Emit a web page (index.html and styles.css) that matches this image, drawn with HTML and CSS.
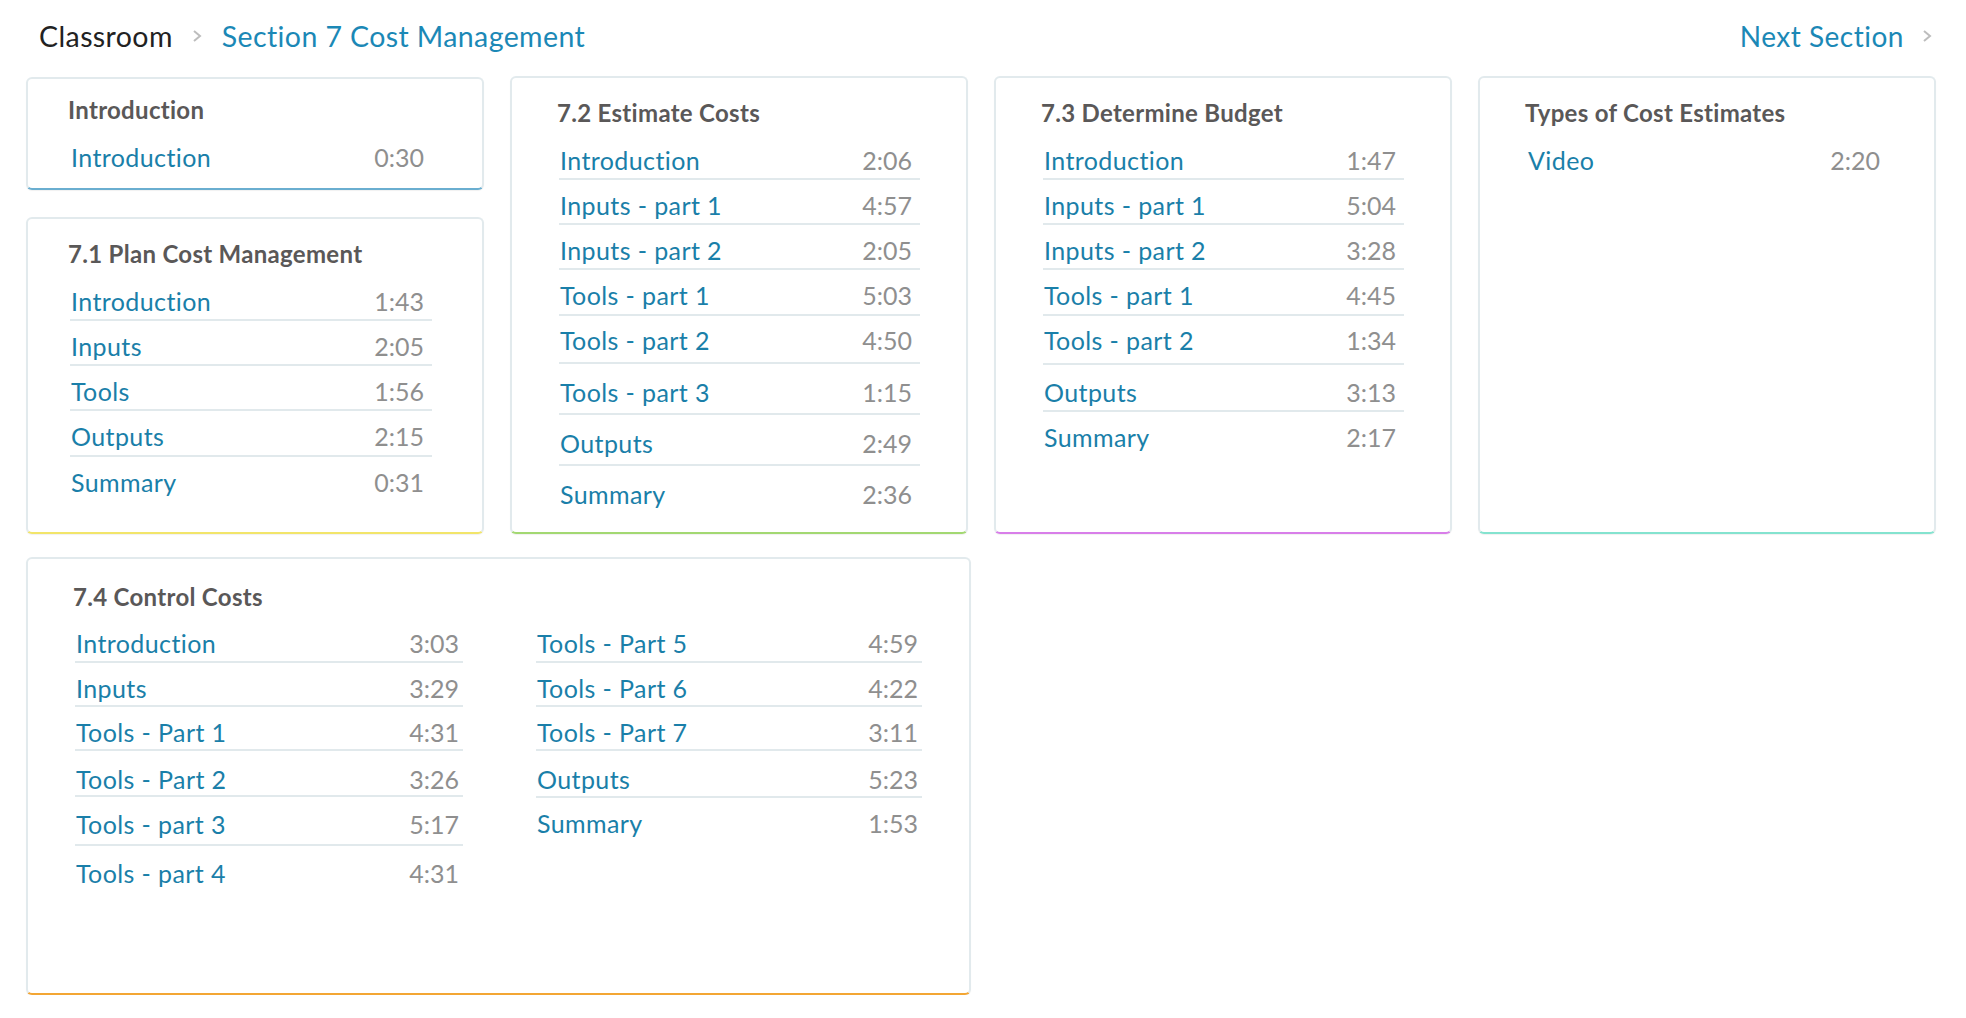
FILE: index.html
```html
<!DOCTYPE html>
<html lang="en">
<head>
<meta charset="utf-8">
<title>Section 7 Cost Management</title>
<link rel="stylesheet" href="styles.css">
</head>
<body>
<div class="page">
  <header class="topbar">
    <nav class="crumbs">
      <span class="crumb-root">Classroom</span>
      <svg class="chev" width="10" height="14" viewBox="0 0 10 14"><polyline points="2,2 8,7 2,12" fill="none" stroke="#bdbdbd" stroke-width="2"/></svg>
      <span class="crumb-current">Section 7 Cost Management</span>
    </nav>
    <a class="next">Next Section
      <svg class="chev" width="10" height="14" viewBox="0 0 10 14"><polyline points="2,2 8,7 2,12" fill="none" stroke="#bdbdbd" stroke-width="2"/></svg>
    </a>
  </header>

  <main class="grid">
    <div class="col1">
      <section class="card card-intro c-blue">
        <h2 class="card-title">Introduction</h2>
        <ul class="list">
          <li class="row"><span class="name">Introduction</span><span class="time">0:30</span></li>
        </ul>
      </section>
      <section class="card card-fill c-yellow">
        <h2 class="card-title">7.1 Plan Cost Management</h2>
        <ul class="list">
          <li class="row"><span class="name">Introduction</span><span class="time">1:43</span></li>
          <li class="row"><span class="name">Inputs</span><span class="time">2:05</span></li>
          <li class="row"><span class="name">Tools</span><span class="time">1:56</span></li>
          <li class="row h46"><span class="name">Outputs</span><span class="time">2:15</span></li>
          <li class="row"><span class="name">Summary</span><span class="time">0:31</span></li>
        </ul>
      </section>
    </div>

    <section class="card c-green">
      <h2 class="card-title">7.2 Estimate Costs</h2>
      <ul class="list">
        <li class="row"><span class="name">Introduction</span><span class="time">2:06</span></li>
        <li class="row"><span class="name">Inputs - part 1</span><span class="time">4:57</span></li>
        <li class="row"><span class="name">Inputs - part 2</span><span class="time">2:05</span></li>
        <li class="row h46"><span class="name">Tools - part 1</span><span class="time">5:03</span></li>
        <li class="row h48"><span class="name">Tools - part 2</span><span class="time">4:50</span></li>
        <li class="row h51"><span class="name">Tools - part 3</span><span class="time">1:15</span></li>
        <li class="row h51"><span class="name">Outputs</span><span class="time">2:49</span></li>
        <li class="row h51"><span class="name">Summary</span><span class="time">2:36</span></li>
      </ul>
    </section>

    <section class="card c-purple">
      <h2 class="card-title">7.3 Determine Budget</h2>
      <ul class="list">
        <li class="row"><span class="name">Introduction</span><span class="time">1:47</span></li>
        <li class="row"><span class="name">Inputs - part 1</span><span class="time">5:04</span></li>
        <li class="row"><span class="name">Inputs - part 2</span><span class="time">3:28</span></li>
        <li class="row h46"><span class="name">Tools - part 1</span><span class="time">4:45</span></li>
        <li class="row h49"><span class="name">Tools - part 2</span><span class="time">1:34</span></li>
        <li class="row h47"><span class="name">Outputs</span><span class="time">3:13</span></li>
        <li class="row"><span class="name">Summary</span><span class="time">2:17</span></li>
      </ul>
    </section>

    <section class="card c-teal">
      <h2 class="card-title">Types of Cost Estimates</h2>
      <ul class="list">
        <li class="row"><span class="name">Video</span><span class="time">2:20</span></li>
      </ul>
    </section>

    <section class="card card-wide c-orange">
      <h2 class="card-title">7.4 Control Costs</h2>
      <div class="two-col">
        <ul class="list">
          <li class="row"><span class="name">Introduction</span><span class="time">3:03</span></li>
          <li class="row h44"><span class="name">Inputs</span><span class="time">3:29</span></li>
          <li class="row h44"><span class="name">Tools - Part 1</span><span class="time">4:31</span></li>
          <li class="row h46b"><span class="name">Tools - Part 2</span><span class="time">3:26</span></li>
          <li class="row h49b"><span class="name">Tools - part 3</span><span class="time">5:17</span></li>
          <li class="row h49b"><span class="name">Tools - part 4</span><span class="time">4:31</span></li>
        </ul>
        <ul class="list">
          <li class="row"><span class="name">Tools - Part 5</span><span class="time">4:59</span></li>
          <li class="row h44"><span class="name">Tools - Part 6</span><span class="time">4:22</span></li>
          <li class="row h44"><span class="name">Tools - Part 7</span><span class="time">3:11</span></li>
          <li class="row h47b"><span class="name">Outputs</span><span class="time">5:23</span></li>
          <li class="row"><span class="name">Summary</span><span class="time">1:53</span></li>
        </ul>
      </div>
    </section>
  </main>
</div>
</body>
</html>
```

FILE: styles.css
```css
* { box-sizing: border-box; }

html, body {
  margin: 0;
  padding: 0;
  background: #ffffff;
}

body {
  font-family: Lato, "Noto Sans", "Liberation Sans", sans-serif;
  color: #333;
}

.page {
  padding: 0 30px 0 26px;
}

/* ---------- top bar ---------- */
.topbar {
  display: flex;
  justify-content: space-between;
  align-items: center;
  height: 76px;
  padding: 0 4px 4px 13px;
}

.crumbs {
  display: flex;
  align-items: center;
  font-size: 28.5px;
  letter-spacing: 0.4px;
  line-height: 36px;
}

.crumb-root {
  color: #222222;
}

.crumbs .chev {
  margin: 0 20px 0 19px;
}

.crumb-current {
  color: #1b88b6;
}

.next {
  display: flex;
  align-items: center;
  font-size: 28px;
  letter-spacing: 0.5px;
  line-height: 36px;
  color: #1b88b6;
}

.next .chev {
  margin-left: 18px;
}

/* ---------- grid ---------- */
.grid {
  display: grid;
  grid-template-columns: repeat(4, 458px);
  grid-template-rows: 458px auto;
  column-gap: 26px;
  row-gap: 23px;
}

.col1 {
  display: flex;
  flex-direction: column;
  gap: 27px;
  padding-top: 1px;
}

.card {
  background: #fff;
  border: 2px solid #e2eaed;
  border-radius: 6px;
  box-shadow: 0 1px 1px rgba(0, 0, 0, 0.06);
  padding: 20px 46px 0 47px;
}

.col1 .card {
  padding-left: 42px;
  padding-right: 50px;
}

.col1 .card-intro {
  padding-top: 16px;
  padding-bottom: 11px;
}

.card-fill {
  flex: 1;
}

.c-blue   { border-bottom-color: #6aaed0; }
.c-yellow { border-bottom-color: #f2e56a; }
.c-green  { border-bottom-color: #a3d872; }
.c-purple { border-bottom-color: #d87ee9; }
.c-teal   { border-bottom-color: #84e3cf; }
.c-orange { border-bottom-color: #f3a634; }

.card-title {
  margin: 0 0 7px -2px;
  font-size: 24px;
  letter-spacing: 0.3px;
  line-height: 30px;
  font-weight: 700;
  color: #5a5858;
}

.list {
  list-style: none;
  margin: 0;
  padding: 0;
}

.row {
  display: flex;
  justify-content: space-between;
  align-items: flex-end;
  height: 45px;
  padding: 0 8px 3px 1px;
  border-bottom: 2px solid #e1e9ec;
  font-size: 25px;
  letter-spacing: 0.4px;
  line-height: 30px;
}

.row:last-child {
  border-bottom-color: transparent;
}

.h44  { height: 44px; padding-bottom: 2px; }
.h46  { height: 46px; padding-bottom: 4px; }
.h47  { height: 47px; padding-bottom: 3px; }
.h48  { height: 48px; padding-bottom: 7px; }
.h49  { height: 49px; padding-bottom: 8px; }
.h51  { height: 51px; padding-bottom: 6px; }
.h46b { height: 46px; padding-bottom: 1px; }
.h47b { height: 47px; padding-bottom: 2px; }
.h49b { height: 49px; padding-bottom: 5px; }

.name {
  color: #1a7fa9;
}

.time {
  color: #8f8f8f;
  letter-spacing: 0;
}

/* ---------- wide card ---------- */
.card-wide {
  grid-column: 1 / span 2;
  min-height: 438px;
  margin-right: -3px;
  padding-top: 23px;
  padding-left: 47px;
}

.card-wide .card-title {
  margin-bottom: 6px;
}

.two-col {
  display: grid;
  grid-template-columns: 388px 386px;
  column-gap: 73px;
  align-items: start;
}

.card-wide .row {
  padding-right: 4px;
}
```
